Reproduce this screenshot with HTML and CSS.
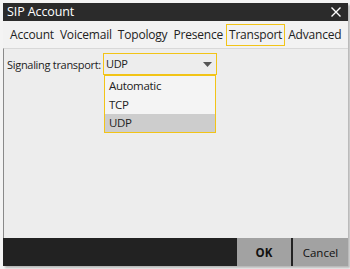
FILE: index.html
```html
<!DOCTYPE html>
<html>
<head>
<meta charset="utf-8">
<link rel="stylesheet" href="styles.css">
</head>
<body>
<div class="window">
  <div class="titlebar">
    <span class="title">SIP Account</span>
    <svg class="close" width="10" height="10" viewBox="0 0 10 10"><path d="M0.5 0.5 L9.5 9.5 M9.5 0.5 L0.5 9.5" stroke="#fff" stroke-width="1.4" fill="none"/></svg>
  </div>
  <div class="tabs">
    <span class="tab">Account</span>
    <span class="tab">Voicemail</span>
    <span class="tab">Topology</span>
    <span class="tab">Presence</span>
    <span class="tab active">Transport</span>
    <span class="tab">Advanced</span>
  </div>
  <div class="content">
    <div class="row">
      <span class="label">Signaling transport:</span>
      <div class="combo">
        <span class="combo-value">UDP</span>
        <svg class="arrow" width="9" height="5" viewBox="0 0 9 5"><path d="M0 0 L9 0 L4.5 5 Z" fill="#555"/></svg>
        <ul class="list">
          <li class="item">Automatic</li>
          <li class="item">TCP</li>
          <li class="item selected">UDP</li>
        </ul>
      </div>
    </div>
  </div>
  <div class="footer">
    <button class="btn ok">OK</button>
    <button class="btn">Cancel</button>
  </div>
</div>
</body>
</html>
```
FILE: styles.css
```css
html, body {
  margin: 0;
  padding: 0;
}
body {
  width: 350px;
  height: 269px;
  background: #f4f4f4;
  font-family: "Open Sans", "Noto Sans", sans-serif;
  overflow: hidden;
}
.window {
  margin: 3px 2px 0 3px;
  height: 263px;
  display: flex;
  flex-direction: column;
  box-shadow: 2px 2px 2px rgba(0,0,0,0.25);
}
.titlebar {
  height: 18px;
  background: #2b2b2b;
  color: #fff;
  display: flex;
  align-items: center;
  justify-content: space-between;
  padding: 0 7px 0 4px;
  font-size: 12.5px;
  letter-spacing: -0.1px;
}
.title {
  line-height: 18px;
}
.close {
  display: block;
}
.tabs {
  height: 27px;
  background: #f2f2f2;
  display: flex;
  align-items: flex-start;
  padding: 3px 0 0 4px;
  box-sizing: border-box;
  font-size: 12px;
  letter-spacing: -0.2px;
  color: #222;
}
.tab {
  border: 1px solid transparent;
  padding: 0 2px;
  height: 20px;
  line-height: 20px;
}
.tab.active {
  border-color: #f2c417;
}
.content {
  flex: 1;
  background: #ededed;
  border-left: 1px solid #8a8a8a;
  border-top: 1px solid #d8d8d8;
  padding: 4px 0 0 3px;
}
.row {
  display: flex;
  align-items: center;
  font-size: 11px;
  letter-spacing: -0.3px;
  color: #222;
}
.label {
  margin-right: 2px;
}
.combo {
  position: relative;
  width: 106px;
  height: 20px;
  border: 1px solid #f2c417;
  display: flex;
  align-items: center;
  justify-content: space-between;
  padding: 0 4px 0 2px;
  box-sizing: content-box;
}
.combo-value {
  line-height: 20px;
}
.list {
  position: absolute;
  left: 0;
  top: 21px;
  width: 110px;
  margin: 0;
  padding: 0;
  list-style: none;
  border: 1px solid #f2c417;
  background: #f4f4f4;
  font-size: 11.5px;
}
.item {
  height: 19px;
  line-height: 19px;
  padding-left: 4px;
}
.item.selected {
  background: #cdcdcd;
  height: 18px;
  line-height: 18px;
}
.footer {
  height: 28px;
  background: #222;
  display: flex;
  justify-content: flex-end;
}
.btn {
  border: 0;
  margin: 0;
  padding: 0;
  background: #a2a2a2;
  font-family: inherit;
  font-size: 11.5px;
  color: #111;
  height: 28px;
  width: 55px;
}
.btn.ok {
  font-weight: bold;
  width: 54px;
  margin-right: 2px;
}
```
